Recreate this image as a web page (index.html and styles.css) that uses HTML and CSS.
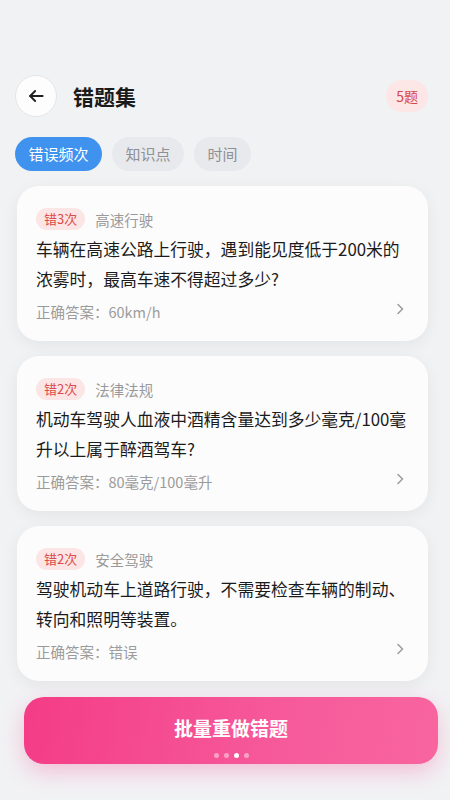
FILE: index.html
```html
<!DOCTYPE html>
<html lang="zh-CN">
<head>
<meta charset="UTF-8">
<meta name="viewport" content="width=device-width, initial-scale=1.0">
<title>错题集</title>
<link rel="stylesheet" href="styles.css">
</head>
<body>

<div class="page">
  <!-- header -->
  <div class="header">
    <button class="back-btn" aria-label="返回">
      <svg width="20" height="20" viewBox="0 0 24 24" fill="none" stroke="#1f1f1f" stroke-width="2.2" stroke-linecap="round" stroke-linejoin="round">
        <path d="M20 12H5"/>
        <path d="M11 6l-6 6 6 6"/>
      </svg>
    </button>
    <h1 class="title">错题集</h1>
    <span class="count-badge">5题</span>
  </div>

  <!-- sort tabs -->
  <div class="tabs">
    <span class="tab active">错误频次</span>
    <span class="tab">知识点</span>
    <span class="tab">时间</span>
  </div>

  <!-- wrong question list -->
  <div class="list">
    <div class="card">
      <div class="card-top">
        <span class="err-tag">错3次</span>
        <span class="category">高速行驶</span>
      </div>
      <p class="question">车辆在高速公路上行驶，遇到能见度低于200米的<br>浓雾时，最高车速不得超过多少?</p>
      <div class="answer-row">
        <span class="answer">正确答案：60km/h</span>
        <svg class="chevron" width="12" height="12" viewBox="0 0 12 12" fill="none" stroke="#9b9b9b" stroke-width="1.5" stroke-linecap="round" stroke-linejoin="round"><path d="M4 1.5l4.5 4.5L4 10.5"/></svg>
      </div>
    </div>

    <div class="card">
      <div class="card-top">
        <span class="err-tag">错2次</span>
        <span class="category">法律法规</span>
      </div>
      <p class="question">机动车驾驶人血液中酒精含量达到多少毫克/100毫升以上属于醉酒驾车?</p>
      <div class="answer-row">
        <span class="answer">正确答案：80毫克/100毫升</span>
        <svg class="chevron" width="12" height="12" viewBox="0 0 12 12" fill="none" stroke="#9b9b9b" stroke-width="1.5" stroke-linecap="round" stroke-linejoin="round"><path d="M4 1.5l4.5 4.5L4 10.5"/></svg>
      </div>
    </div>

    <div class="card">
      <div class="card-top">
        <span class="err-tag">错2次</span>
        <span class="category">安全驾驶</span>
      </div>
      <p class="question">驾驶机动车上道路行驶，不需要检查车辆的制动、转向和照明等装置。</p>
      <div class="answer-row">
        <span class="answer">正确答案：错误</span>
        <svg class="chevron" width="12" height="12" viewBox="0 0 12 12" fill="none" stroke="#9b9b9b" stroke-width="1.5" stroke-linecap="round" stroke-linejoin="round"><path d="M4 1.5l4.5 4.5L4 10.5"/></svg>
      </div>
    </div>
  </div>

  <!-- bottom action -->
  <button class="redo-btn">
    <span class="redo-text">批量重做错题</span>
    <span class="dots">
      <i class="dot"></i>
      <i class="dot"></i>
      <i class="dot on"></i>
      <i class="dot"></i>
    </span>
  </button>
</div>

</body>
</html>
```

FILE: styles.css
```css
* {
  box-sizing: border-box;
}

html {
  background-color: #f1f2f4;
}

body {
  margin: 0;
  min-height: 100vh;
  background-color: #f1f2f4;
  font-family: "Noto Sans CJK SC", "Noto Sans", sans-serif;
  color: #1f1f1f;
}

.page {
  padding: 75px 22px 0 17px;
}

/* header */
.header {
  display: flex;
  align-items: center;
}

.back-btn {
  width: 42px;
  height: 42px;
  border-radius: 50%;
  border: 1px solid #e5e5e7;
  background-color: #fdfdfd;
  display: flex;
  align-items: center;
  justify-content: center;
  padding: 0;
  margin-left: -2px;
}

.title {
  margin: 0 0 0 16px;
  font-size: 21px;
  font-weight: 700;
  color: #1a1a1a;
  flex: 1;
}

.count-badge {
  background-color: #fce6e6;
  color: #d94848;
  font-size: 14px;
  line-height: 20px;
  padding: 6px 10px;
  border-radius: 16px;
}

/* tabs */
.tabs {
  display: flex;
  gap: 10px;
  margin-top: 20px;
  margin-left: -2px;
}

.tab {
  height: 34px;
  line-height: 34px;
  padding: 0 13.5px;
  border-radius: 17px;
  font-size: 15px;
  background-color: #e8e9ec;
  color: #8d9096;
}

.tab.active {
  background-color: #3f93ef;
  color: #fff;
}

/* cards */
.list {
  display: flex;
  flex-direction: column;
  gap: 15px;
  margin-top: 15px;
}

.card {
  background-color: #fcfcfc;
  border-radius: 22px;
  padding: 22px 10px 19px 19px;
  box-shadow: 0 4px 16px rgba(0, 0, 0, 0.06);
}

.card-top {
  display: flex;
  align-items: center;
}

.err-tag {
  background-color: #fce5e5;
  color: #dd4a4a;
  font-size: 13px;
  line-height: 22px;
  padding: 0 8px;
  border-radius: 11px;
}

.category {
  margin-left: 10px;
  font-size: 14.5px;
  color: #9a9a9a;
}

.question {
  margin: 4px 0 0;
  font-size: 16.8px;
  line-height: 30px;
  color: #1b1b1b;
}

.answer-row {
  display: flex;
  align-items: center;
  justify-content: space-between;
  margin-top: 8px;
}

.answer {
  font-size: 14.5px;
  line-height: 20px;
  color: #9b9b9b;
}

.chevron {
  margin-right: 12px;
  margin-top: -6px;
}

/* bottom button */
.redo-btn {
  width: calc(100% + 3px);
  margin: 16px 0 0 7px;
  border: none;
  border-radius: 20px;
  background: linear-gradient(100deg, #f43c86 0%, #f6599a 60%, #f8659f 100%);
  box-shadow: 0 8px 22px rgba(244, 66, 138, 0.28);
  padding: 18px 0 6px;
  display: flex;
  flex-direction: column;
  align-items: center;
  font-family: inherit;
}

.redo-text {
  color: #fff;
  font-size: 19px;
  font-weight: 700;
  line-height: 26px;
}

.dots {
  display: flex;
  gap: 5px;
  margin-top: 12px;
}

.dot {
  width: 5px;
  height: 5px;
  border-radius: 50%;
  background-color: rgba(255, 255, 255, 0.45);
}

.dot.on {
  background-color: #fff;
}
```
